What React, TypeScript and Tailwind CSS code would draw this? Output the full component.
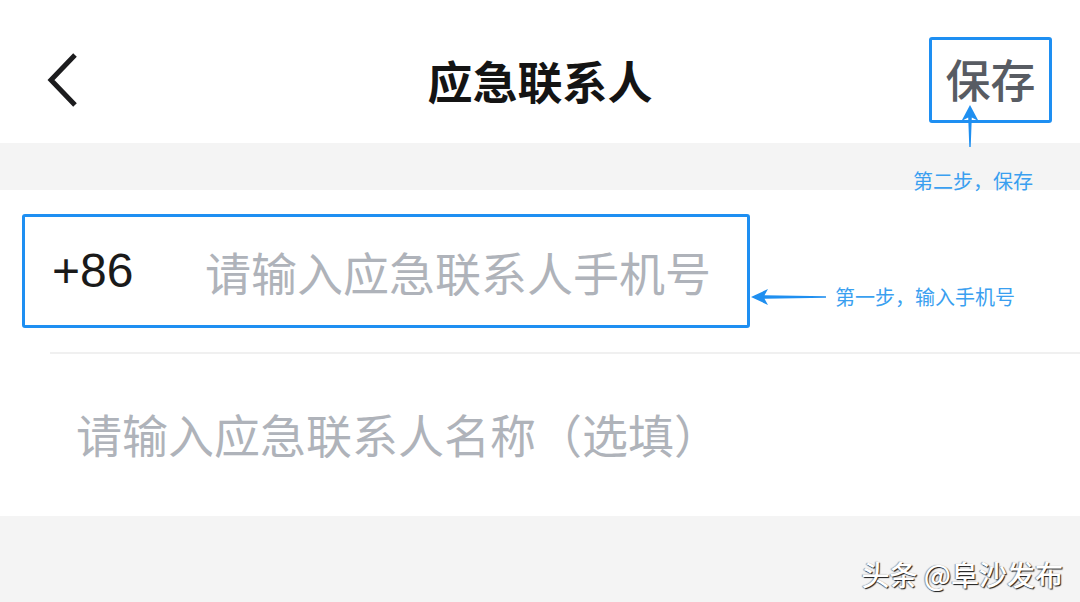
const cjk = "font-['Noto_Sans_CJK_SC','Noto_Sans',sans-serif]"

function BackIcon() {
  return (
    <svg width="36" height="58" viewBox="0 0 36 58" fill="none">
      <polyline points="29,4 5,29 29,54" stroke="#1c1c1e" strokeWidth="5" strokeLinejoin="miter" strokeLinecap="butt" />
    </svg>
  )
}

function ArrowLeft() {
  return (
    <svg width="76" height="18" viewBox="0 0 76 18">
      <path d="M0 9 L17 1 L13.5 7.2 L75 8.3 L75 9.7 L13.5 10.8 L17 17 Z" fill="#1f8ff0" />
    </svg>
  )
}

function ArrowUp() {
  return (
    <svg width="20" height="42" viewBox="0 0 20 42">
      <path d="M10 0 L18.5 16 L11.8 12.5 L10.7 42 L9.3 42 L8.2 12.5 L1.5 16 Z" fill="#1f8ff0" />
    </svg>
  )
}

export default function App() {
  return (
    <div className={`relative flex h-[602px] w-[1080px] flex-col overflow-hidden bg-[#f4f4f4] ${cjk}`}>
      {/* header */}
      <header className="grid h-[143px] grid-cols-[1fr_auto_1fr] items-center bg-white pt-[17px]">
        <div className="pl-[46px]">
          <BackIcon />
        </div>
        <h1 className="text-[45px] leading-none font-bold text-[#141414]">应急联系人</h1>
        <div className="mr-[28px] justify-self-end">
          <div className="flex h-[86px] w-[123px] items-center justify-center rounded-[3px] border-[3px] border-[#1e8ff2] pb-[4px]">
            <span className="text-[45px] leading-none font-medium text-[#585c63]">保存</span>
          </div>
        </div>
      </header>

      <div className="h-[47px]" />

      {/* form */}
      <section className="flex h-[326px] flex-col bg-white">
        <div className="flex h-[162px] items-start pt-[24px] pl-[22px]">
          <div className="flex h-[114px] w-[728px] items-center rounded-[3px] border-[3px] border-[#1e8ff2] pl-[27px]">
            <span className="w-[153px] font-['Liberation_Sans',Arial,sans-serif] text-[48px] leading-none text-[#1a1a1a]">+86</span>
            <span className="text-[46px] leading-none text-[#afb3ba]">请输入应急联系人手机号</span>
          </div>
          <div className="mt-[73px] ml-[1px] flex items-center gap-[8px]">
            <ArrowLeft />
            <span className="text-[20px] leading-none text-[#3a9ff0]">第一步，输入手机号</span>
          </div>
        </div>
        <div className="ml-[50px] h-[2px] bg-[#f0f0f0]" />
        <div className="flex flex-1 items-center pb-[4px] pl-[76px]">
          <span className="text-[46px] leading-none text-[#afb3ba]">请输入应急联系人名称（选填）</span>
        </div>
      </section>

      {/* footer watermark */}
      <div className="flex flex-1 items-end justify-end pr-[17px] pb-[14px]">
        <span className="text-[28px] leading-none font-medium text-white [text-shadow:1px_1px_1px_rgba(0,0,0,0.9),-1px_0_1px_rgba(0,0,0,0.4)]">头条 @阜沙发布</span>
      </div>

      {/* annotation for step two */}
      <div className="absolute top-[105px] left-[960px]">
        <ArrowUp />
      </div>
      <span className="absolute top-[171px] left-[913px] text-[20px] leading-none text-[#3a9ff0]">第二步，保存</span>
    </div>
  )
}
